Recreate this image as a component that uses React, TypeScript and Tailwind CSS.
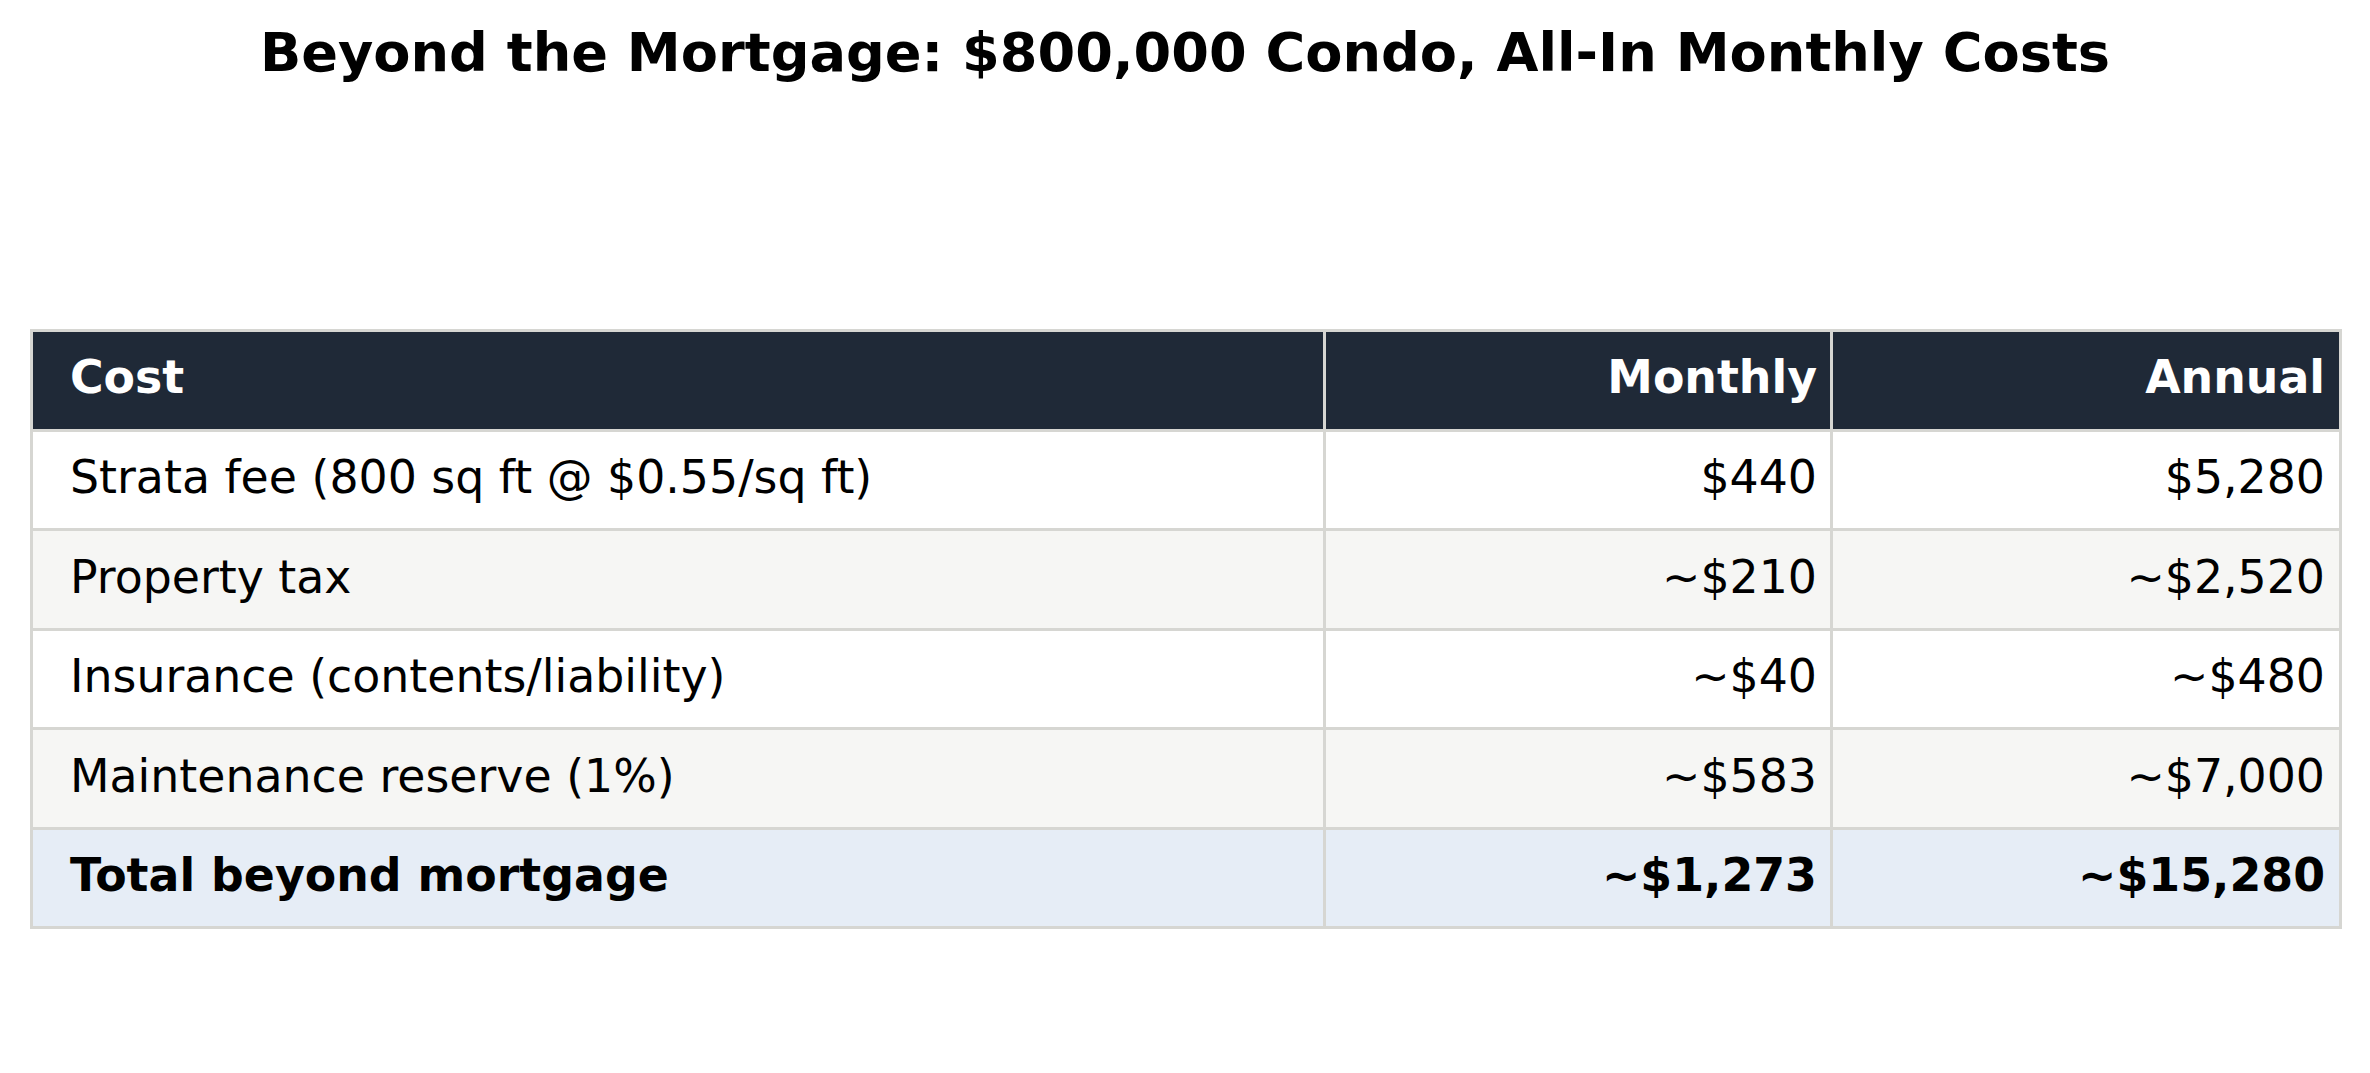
/**
 * App.tsx
 * Static cost table: all-in monthly costs of an $800,000 condo beyond the mortgage.
 */

import React from 'react'

/** One table row */
interface CostRow {
  label: string
  monthly: string
  annual: string
  shade: 'white' | 'alt' | 'total'
}

const rows: CostRow[] = [
  { label: 'Strata fee (800 sq ft @ $0.55/sq ft)', monthly: '$440', annual: '$5,280', shade: 'white' },
  { label: 'Property tax', monthly: '~$210', annual: '~$2,520', shade: 'alt' },
  { label: 'Insurance (contents/liability)', monthly: '~$40', annual: '~$480', shade: 'white' },
  { label: 'Maintenance reserve (1%)', monthly: '~$583', annual: '~$7,000', shade: 'alt' },
  { label: 'Total beyond mortgage', monthly: '~$1,273', annual: '~$15,280', shade: 'total' },
]

const shadeClass: Record<CostRow['shade'], string> = {
  white: 'bg-white',
  alt: 'bg-[#f6f6f4]',
  total: 'bg-[#e6edf6] font-bold',
}

/**
 * App
 * Title over a three-column table.
 */
export default function App(): JSX.Element {
  return (
    <div
      className="w-[2370px] h-[1073px] bg-white text-black overflow-hidden"
      style={{ fontFamily: '"DejaVu Sans", Verdana, sans-serif' }}
    >
      {/* 标题 */}
      <h1 className="pt-[26px] text-center text-[54.2px] leading-none font-bold">
        Beyond the Mortgage: $800,000 Condo, All-In Monthly Costs
      </h1>

      {/* 表格 */}
      <div className="ml-[30px] mt-[249px] w-[2312px] grid grid-cols-[1290px_504px_506px] auto-rows-[96.5px] gap-[3px] p-[3px] bg-[#d6d6d2] text-[45.8px] leading-none">
        <div className="bg-[#1f2937] text-white font-bold flex items-center pl-[37px] pb-[5px]">Cost</div>
        <div className="bg-[#1f2937] text-white font-bold flex items-center justify-end pr-[13px] pb-[5px]">
          Monthly
        </div>
        <div className="bg-[#1f2937] text-white font-bold flex items-center justify-end pr-[14px] pb-[5px]">
          Annual
        </div>

        {rows.map((r) => (
          <React.Fragment key={r.label}>
            <div className={`${shadeClass[r.shade]} flex items-center pl-[37px] pb-[4px]`}>{r.label}</div>
            <div className={`${shadeClass[r.shade]} flex items-center justify-end pr-[13px] pb-[4px]`}>
              {r.monthly}
            </div>
            <div className={`${shadeClass[r.shade]} flex items-center justify-end pr-[14px] pb-[4px]`}>
              {r.annual}
            </div>
          </React.Fragment>
        ))}
      </div>
    </div>
  )
}
